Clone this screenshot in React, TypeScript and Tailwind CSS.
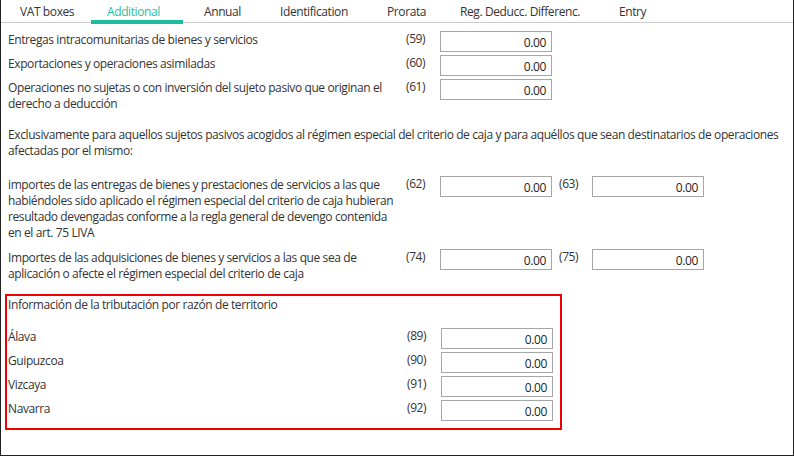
import React from "react";

const tabs = [
  { label: "VAT boxes", w: "w-[90px]", pl: "pl-[19px]", active: false },
  { label: "Additional", w: "w-[92px]", pl: "pl-[16px]", active: true },
  { label: "Annual", w: "w-[78px]", pl: "pl-[21px]", active: false },
  { label: "Identification", w: "w-[106px]", pl: "pl-[19px]", active: false },
  { label: "Prorata", w: "w-[74px]", pl: "pl-[20px]", active: false },
  { label: "Reg. Deducc. Differenc.", w: "w-[160px]", pl: "pl-[19px]", active: false },
  { label: "Entry", w: "w-[64px]", pl: "pl-[18px]", active: false },
];

function Box() {
  return (
    <div className="w-[112px] h-[21px] border border-[#a6a6a6] bg-white flex items-center justify-end pr-[5px] pt-[3px] text-[12px] leading-[16px] text-[#222]">
      0.00
    </div>
  );
}

function Row({
  label,
  code,
  code2,
  labelW = "w-[398px]",
}: {
  label: React.ReactNode;
  code: string;
  code2?: string;
  labelW?: string;
}) {
  return (
    <div className="flex items-start">
      <div className={`${labelW} pr-[6px] pt-[1px]`}>{label}</div>
      <div className="w-[34px]">{code}</div>
      <Box />
      {code2 && (
        <>
          <div className="w-[40px] pl-[7px]">{code2}</div>
          <Box />
        </>
      )}
    </div>
  );
}

export default function App() {
  return (
    <div
      className="w-[794px] h-[456px] bg-white border-l border-r border-b border-[#222] overflow-hidden text-[12px] leading-[16px] tracking-[-0.4px] text-[#333]"
      style={{ fontFamily: '"Open Sans", "Noto Sans", sans-serif' }}
    >
      <div className="h-[23px] border-b border-[#cccccc] flex">
        {tabs.map((t) => (
          <div
            key={t.label}
            className={`${t.w} ${t.pl} h-[23px] pt-[4px] ${
              t.active
                ? "text-[#1fbf9f] border-b-[4px] border-[#1dbc9c] h-[24px] pt-[3px]"
                : "text-[#333]"
            }`}
          >
            {t.label}
          </div>
        ))}
      </div>

      <div className="pl-[7px] pt-[8px]">
        <div className="flex flex-col gap-[3px]">
          <Row label="Entregas intracomunitarias de bienes y servicios" code="(59)" />
          <Row label="Exportaciones y operaciones asimiladas" code="(60)" />
          <Row
            label="Operaciones no sujetas o con inversión del sujeto pasivo que originan el derecho a deducción"
            code="(61)"
          />
        </div>

        <p className="mt-[15px] pr-[12px]">
          Exclusivamente para aquellos sujetos pasivos acogidos al régimen especial del criterio de caja y para aquéllos que sean destinatarios de operaciones afectadas por el mismo:
        </p>

        <div className="mt-[17px] flex flex-col gap-[8px]">
          <Row
            label="importes de las entregas de bienes y prestaciones de servicios a las que habiéndoles sido aplicado el régimen especial del criterio de caja hubieran resultado devengadas conforme a la regla general de devengo contenida en el art. 75 LIVA"
            code="(62)"
            code2="(63)"
          />
          <Row
            label="Importes de las adquisiciones de bienes y servicios a las que sea de aplicación o afecte el régimen especial del criterio de caja"
            code="(74)"
            code2="(75)"
          />
        </div>

        <div className="mt-[12px] ml-[-3px] w-[557px] border-2 border-[#ee0000] pl-[1px] pb-[7px]">
          <div className="pt-[1px]">Información de la tributación por razón de territorio</div>
          <div className="mt-[15px] flex flex-col gap-[3px]">
            <Row label="Álava" code="(89)" labelW="w-[399px]" />
            <Row label="Guipuzcoa" code="(90)" labelW="w-[399px]" />
            <Row label="Vizcaya" code="(91)" labelW="w-[399px]" />
            <Row label="Navarra" code="(92)" labelW="w-[399px]" />
          </div>
        </div>
      </div>
    </div>
  );
}
